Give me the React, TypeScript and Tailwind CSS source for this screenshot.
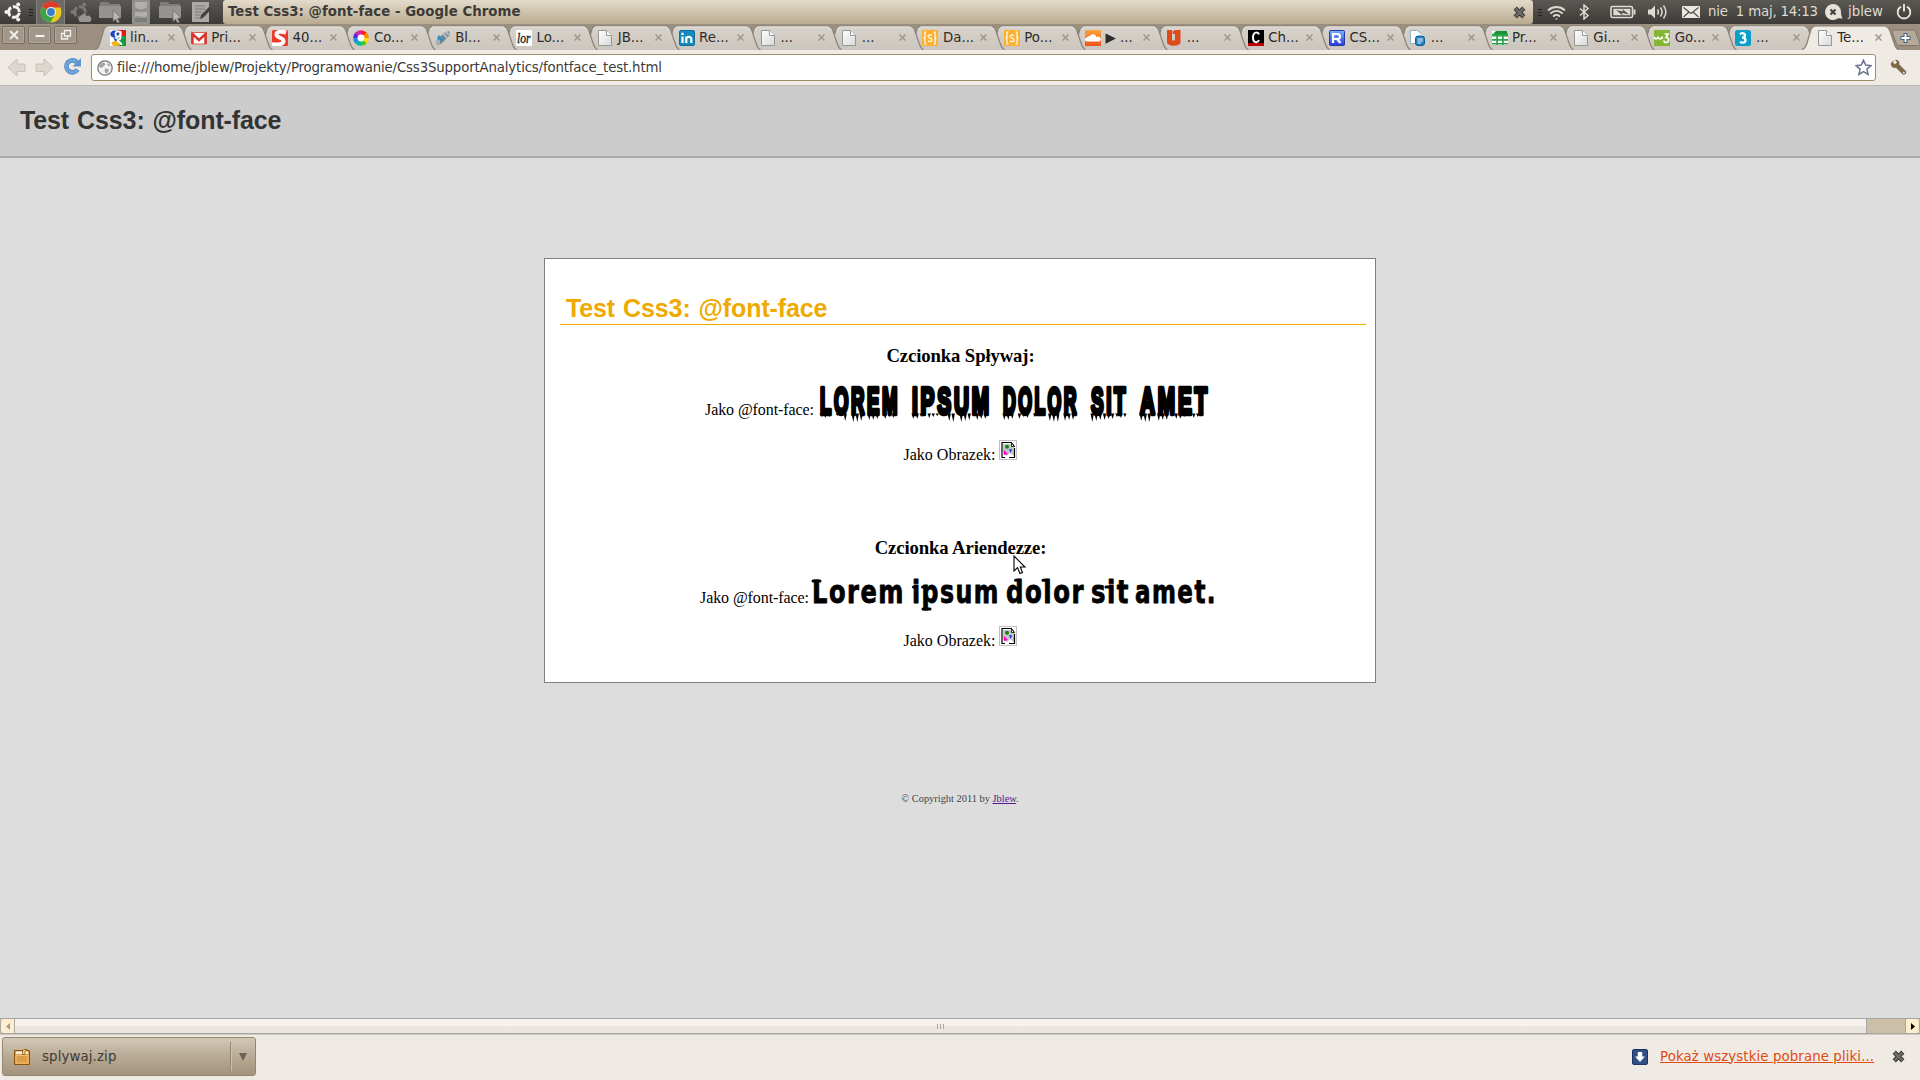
import React from "react";
import { LuWifi } from "react-icons/lu";

type Kind =
  | "google" | "gmail" | "s" | "wheel" | "pen" | "lor" | "doc" | "in" | "curly"
  | "cloud" | "u" | "c" | "r" | "gdoc" | "sheet" | "w3" | "three";

const tabs: { kind: Kind; label: string }[] = [
  { kind: "google", label: "lin..." },
  { kind: "gmail", label: "Pri..." },
  { kind: "s", label: "40..." },
  { kind: "wheel", label: "Co..." },
  { kind: "pen", label: "Bl..." },
  { kind: "lor", label: "Lo..." },
  { kind: "doc", label: "JB..." },
  { kind: "in", label: "Re..." },
  { kind: "doc", label: "..." },
  { kind: "doc", label: "..." },
  { kind: "curly", label: "Da..." },
  { kind: "curly", label: "Po..." },
  { kind: "cloud", label: "▶ ..." },
  { kind: "u", label: "..." },
  { kind: "c", label: "Ch..." },
  { kind: "r", label: "CS..." },
  { kind: "gdoc", label: "..." },
  { kind: "sheet", label: "Pr..." },
  { kind: "doc", label: "Gi..." },
  { kind: "w3", label: "Go..." },
  { kind: "three", label: "..." },
  { kind: "doc", label: "Te..." },
];

function iconArt(kind: Kind) {
  switch (kind) {
    case "google":
      return (
        <>
          <path d="M0 0h9L5 16H0z" fill="#fff" />
          <path d="M7 0h9v6H9z" fill="#e11a1a" />
          <path d="M9 6h7v10H8z" fill="#169a3c" />
          <path d="M0 6l7 4-3 6H0z" fill="#fff" />
          <ellipse cx="4.6" cy="4" rx="4.2" ry="3.6" fill="#1a49c0" />
          <path d="M3 7l6 4-3 2z" fill="#1a49c0" />
          <ellipse cx="6" cy="13.5" rx="4.5" ry="2.6" fill="#f2b21b" />
          <circle cx="8" cy="4" r="2.6" fill="none" stroke="#fff" strokeWidth="1.8" />
          <path d="M10.5 1v7c0 2-3 2-3 3s4 1 4 4" fill="none" stroke="#fff" strokeWidth="1.8" />
        </>
      );
    case "gmail":
      return (
        <>
          <rect x="0.5" y="2.5" width="15" height="11.5" rx="1" fill="#fff" stroke="#d9605a" />
          <path d="M1.5 14V4l6.500 6 6.500-6v10" fill="none" stroke="#d8342c" strokeWidth="2.400" />
        </>
      );
    case "s":
      return (
        <>
          <rect width="16" height="16" rx="1.500" fill="#ee3a2b" />
          <path d="M14 2.500C9.500 1 4.500 1.500 4.500 4.500c0 3.500 7 3 7 6.500 0 3-5 4.500-11.500 3" fill="none" stroke="#fff" strokeWidth="4" />
        </>
      );
    case "wheel":
      return (
        <g fill="none" strokeWidth="4.500">
          {["#f22", "#f80", "#fd0", "#3c2", "#0b9", "#28e", "#62d", "#d2a"].map((c, i) => (
            <circle
              key={c}
              cx="8"
              cy="8"
              r="5.600"
              stroke={c}
              pathLength={8}
              strokeDasharray="1.05 6.95"
              strokeDashoffset={-i + 2}
            />
          ))}
          <circle cx="8" cy="8" r="3.400" fill="#fff" stroke="none" />
        </g>
      );
    case "pen":
      return (
        <>
          <path d="M1 11l8-8 5-2 1 4-9 9-4 1z" fill="#7d8790" />
          <path d="M4 5l5 5-3 2-4-4z" fill="#2f8fc8" />
          <path d="M8 3l4 5M11 2l3 3" stroke="#c3cbd2" strokeWidth="1.500" />
          <circle cx="3" cy="12" r="2.300" fill="#a9b2b9" />
        </>
      );
    case "lor":
      return (
        <>
          <rect width="16" height="16" fill="#fff" />
          <text x="1" y="12.5" fontFamily="Liberation Serif, serif" fontStyle="italic" fontSize="14" textLength="13.5" lengthAdjust="spacingAndGlyphs" fill="#111" stroke="#111" strokeWidth=".3">
            lor
          </text>
        </>
      );
    case "doc":
      return (
        <>
          <path d="M1.500.5H9.500L14.500 5.500v10h-13z" fill="url(#paper)" stroke="#969696" />
          <path d="M9.500.5V5.500h5" fill="#fff" stroke="#969696" />
        </>
      );
    case "in":
      return (
        <>
          <rect x="0.500" y="0.500" width="15" height="15" rx="1.500" fill="#1689bd" stroke="#0e6f9f" />
          <path d="M3.500 6.500V13M3.500 2.700v2.200M7.300 13V6.500M7.300 9c0-2.500 5-3 5 0v4" fill="none" stroke="#fff" strokeWidth="2.200" />
        </>
      );
    case "curly":
      return (
        <>
          <rect width="16" height="16" rx="1" fill="#fdb02e" />
          <path d="M4.500 2H3v5L2 8l1 1v5h1.500M11.500 2H13v5l1 1-1 1v5h-1.500" fill="none" stroke="#fff" strokeWidth="1.200" />
          <path d="M10 5.500C8 4 6 5 6 6.300S10 8.500 10 10s-2 2.200-4 1" fill="none" stroke="#ffefd0" strokeWidth="1.500" />
        </>
      );
    case "cloud":
      return (
        <>
          <rect width="16" height="16" fill="url(#orange)" />
          <path d="M2 11.500a2 2 0 0 1 0-4 3 3 0 0 1 3-1.500 3.500 3.500 0 0 1 6.500 1 2.400 2.400 0 0 1 3 4.500z" fill="#fff" />
        </>
      );
    case "u":
      return <path d="M1 0h5v9.500c0 1.500 3 1.500 3 0V4H6.500V1.500L9 0h5.500v12c0 5-13.500 5-13.500 0z" fill="#dd4b1c" />;
    case "c":
      return (
        <>
          <rect width="16" height="16" fill="#000" />
          <rect y="13" width="16" height="3" fill="#c00008" />
          <path d="M11 4.500C10 1.500 5 1.500 5 7.500s5 5.500 6 2.500" fill="none" stroke="#fff" strokeWidth="2" />
        </>
      );
    case "r":
      return (
        <>
          <rect x="0.500" y="0.500" width="15" height="15" rx="1" fill="url(#blue)" stroke="#233aa8" />
          <path d="M4 13V4h4.500a2.300 2.300 0 0 1 0 5H5m3 0l3.500 4" fill="none" stroke="#fff" strokeWidth="2.200" />
        </>
      );
    case "gdoc":
      return (
        <>
          <path d="M.5.5H7.500L11.500 4v9.500H.5z" fill="#fff" stroke="#8fb1cb" />
          <rect x="5.500" y="6" width="9" height="9.500" rx="2.500" fill="#2483bd" stroke="#0d5f96" />
          <path d="M7.500 5.500l2.300-2.300 2.800 2.800M7.500 9h5.500M7.500 11h5.500M7.500 13h3.500" fill="none" stroke="#e4f4ff" />
        </>
      );
    case "sheet":
      return (
        <>
          <rect y="1" width="16" height="14" fill="#fff" />
          <path d="M4 1h11l1 4H0z" fill="#17913a" />
          <path d="M0 4h16v2.500H0zM0 9h16v1.700H0zM0 13h16v1.600H0zM4.200 4h1.700v11H4.200zM10 4h1.700v11H10z" fill="#2ba14a" />
        </>
      );
    case "w3":
      return (
        <>
          <rect width="16" height="16" fill="#85b535" />
          <path d="M0 6.500c0 3 4 3 4 0 0 3 4 3 4.500 0" fill="none" stroke="#fff" strokeWidth="1.700" />
          <path d="M10.500 4H14l-2 3.500c4 0 3 5 0 5-1.500 0-2-1-2-2" fill="none" stroke="#fff" strokeWidth="1.700" />
        </>
      );
    case "three":
      return (
        <>
          <rect width="16" height="16" rx="2.500" fill="#0a9fc9" />
          <path d="M5 4.300C7 2.500 10 3 10 5.300 10 7 8.500 7.700 7 7.700c2 0 3.500.8 3.500 2.600 0 2.700-3.500 3-5.500 1.500" fill="none" stroke="#fff" strokeWidth="2.300" />
        </>
      );
  }
}

function CloseMark() {
  return (
    <svg className="size-[7px] shrink-0" viewBox="0 0 7 7">
      <path d="M.5.5l6 6M6.500.5l-6 6" stroke="#9c978f" strokeWidth="1.500" />
    </svg>
  );
}

function Tab({ kind, label, active, z }: { kind: Kind; label: string; active: boolean; z: number }) {
  return (
    <div className="relative h-[25px] w-[81.3px] shrink-0" style={{ zIndex: z }}>
      <svg className="absolute left-0 top-0 h-[25px] w-[97px]" viewBox="0 0 97 25">
        <path
          d="M0 25C3 24 4 21 5 18L8.500 6C9.500 2 11 .8 14 .8H82C85 .8 86.500 2 88 6l4 12c1 3 2 6 4.500 7z"
          fill={active ? "#efebe4" : "url(#tab)"}
        />
        <path
          d="M0 24.500C3 24 4 21 5 18L8.500 6C9.500 2 11 .8 14 .8H82C85 .8 86.500 2 88 6l4 12c1 3 2 6 4.500 6.500"
          fill="none"
          stroke={active ? "#8a7f70" : "#8b8377"}
          strokeWidth="1.200"
        />
        {!active && <path d="M10 5c1-2.500 2-3 4-3h68c2 0 3 .6 4 3" fill="none" stroke="#e6e2dc" />}
      </svg>
      <div className="relative flex h-[25px] items-center pl-[14.5px]">
        <svg className="size-4 shrink-0" viewBox="0 0 16 16">{iconArt(kind)}</svg>
        <span className="ml-[4.500px] w-[37.500px] shrink-0 whitespace-nowrap text-[13.33px] leading-[25px] text-[#2f2b27]">{label}</span>
        <CloseMark />
      </div>
    </div>
  );
}

function WindowButton({ children }: { children: React.ReactNode }) {
  return (
    <div className="grid h-[18px] w-[23px] place-items-center rounded-[2px] border border-[#776e61] bg-[#a0968a] shadow-[inset_0_0_0_1px_#b0a699]">
      <svg className="h-[12px] w-[14px]" viewBox="0 0 14 12" fill="none" stroke="#f4f1ec" strokeWidth="1.800">
        {children}
      </svg>
    </div>
  );
}

function Ubuntu({ color }: { color: string }) {
  return (
    <g fill="none" stroke={color}>
      <circle cx="10" cy="10" r="5.300" strokeWidth="3" strokeDasharray="9.300 1.800" strokeDashoffset="-0.900" />
      <g fill={color} stroke="none">
        <circle cx="2.400" cy="10" r="2" />
        <circle cx="14.200" cy="2.500" r="2" />
        <circle cx="14.200" cy="17.500" r="2" />
      </g>
    </g>
  );
}

function Folder() {
  return (
    <svg className="h-[22px] w-[24px]" viewBox="0 0 24 22">
      <path d="M1 1h8l2 2h10v13H1z" fill="#7f7e7a" />
      <path d="M0 5h22v12H0z" fill="#94938f" />
      <path d="M14 9l8 8-3.500.3 2 4-2 .7-1.800-3.800L14 20.500z" fill="#b9b8b4" stroke="#6a6965" strokeWidth=".7" />
    </svg>
  );
}

function BoldX() {
  return (
    <svg className="size-[13px]" viewBox="0 0 13 13">
      <path d="M2.200 2.200l8.600 8.600M10.800 2.200l-8.600 8.600" stroke="#3f3e3b" strokeWidth="4.600" />
      <path d="M2.600 2.600l7.800 7.800M10.400 2.600l-7.800 7.800" stroke="#6d6c68" strokeWidth="2.400" />
    </svg>
  );
}

function Grip() {
  return (
    <div className="flex w-[4px] flex-col gap-[2px]">
      <i className="h-px bg-[#23221f]" />
      <i className="h-px bg-[#23221f]" />
      <i className="h-px bg-[#23221f]" />
    </div>
  );
}

function Panel() {
  return (
    <div className="flex h-6 bg-linear-to-b from-[#5a5954] to-[#3c3b37] text-[#dfdbd2]">
      <div className="flex w-[223px] shrink-0 items-center">
        <svg className="ml-[4px] size-[20px]" viewBox="0 0 20 20"><Ubuntu color="#f5f3ef" /></svg>
        <div className="ml-[5px]"><Grip /></div>
        <div className="ml-[3px] grid h-6 w-[29px] place-items-center border-x border-[#83827e] bg-[#6b6a66]">
          <svg className="size-[22px]" viewBox="0 0 22 22">
            <circle cx="11" cy="11" r="10.500" fill="#e8c81c" />
            <path d="M11 11L1.900 5.800A10.500 10.500 0 0 1 20.500 6.500H11z" fill="#dd3b2b" />
            <path d="M11 11L1.900 5.800A10.500 10.500 0 0 0 10.500 21.500L15 13z" fill="#3fa447" />
            <circle cx="11" cy="11" r="5" fill="#f0f0ee" />
            <circle cx="11" cy="11" r="3.900" fill="#3b7fc8" />
          </svg>
        </div>
        <svg className="ml-[4px] h-[24px] w-[25px]" viewBox="0 0 25 24">
          <g transform="translate(1 2)"><Ubuntu color="#7a7975" /></g>
          <path d="M11 22a3 3 0 0 1 0-5 3.500 3.500 0 0 1 6.500-1 3 3 0 0 1 3 6z" fill="#969591" />
        </svg>
        <div className="ml-[5px]"><Folder /></div>
        <svg className="ml-[9px] h-[24px] w-[18px]" viewBox="0 0 18 24">
          <rect width="18" height="24" rx="1" fill="#91908c" />
          <path d="M3 2h12v5c-3 3-9 3-12 0zM3 12h12v4c-4 3-8-2-12 1z" fill="#b1b0ac" />
          <path d="M3 19h12M3 21h12" stroke="#6b6a66" />
        </svg>
        <div className="ml-[9px]"><Folder /></div>
        <svg className="ml-[8px] h-[22px] w-[22px]" viewBox="0 0 22 22">
          <path d="M1 1h17v20H1z" fill="#aaa9a5" />
          <path d="M4 5h10M4 8h10M4 11h7M4 14h5M4 17h8" stroke="#7c7b77" />
          <path d="M18.500 5.500L10 14l-1 4 4-2 7.500-8z" fill="#454440" />
        </svg>
      </div>
      <div className="flex w-[1310px] shrink-0 items-center justify-between rounded-[3px] bg-linear-to-b from-[#e4dbcb] to-[#b9ab90] pl-[5px] pr-[7px]">
        <span className="text-[13.33px] font-bold leading-[22px] tracking-[0.03px] text-[#3c3b37]">Test Css3: @font-face - Google Chrome</span>
        <BoldX />
      </div>
      <div className="flex items-center text-[13.33px]">
        <div className="ml-[5px]"><Grip /></div>
        <LuWifi className="ml-[5px] size-[19px] shrink-0" strokeWidth={2.400} />
        <svg className="ml-[12px] h-[16px] w-[12px] shrink-0" viewBox="0 0 12 16" fill="none" stroke="currentColor" strokeWidth="1.500">
          <path d="M2 4.500l8 7L6 15V1l4 3.500-8 7" />
        </svg>
        <svg className="ml-[20px] h-[14px] w-[26px] shrink-0" viewBox="0 0 26 14">
          <rect x="1" y="1.500" width="21.500" height="11" rx="1.500" fill="none" stroke="currentColor" strokeWidth="1.600" />
          <rect x="3.300" y="3.800" width="17" height="6.500" fill="currentColor" />
          <rect x="23.500" y="4.500" width="2" height="5" fill="currentColor" />
          <path d="M6 5l7 1.500-.5-2.500L19 9.500 12 8l.5 2.500z" fill="#55544f" />
        </svg>
        <svg className="ml-[12px] h-[16px] w-[21px] shrink-0" viewBox="0 0 21 16">
          <path d="M0 5.500h3l4-4v13l-4-4H0z" fill="currentColor" />
          <path d="M9.500 5.500q1.800 2.500 0 5M12.500 3.500q3.200 4.500 0 9M15.500 1.500q4.800 6.500 0 13" fill="none" stroke="currentColor" strokeWidth="1.500" />
        </svg>
        <svg className="ml-[13px] h-[12px] w-[18px] shrink-0" viewBox="0 0 18 12">
          <rect width="18" height="12" rx="1" fill="#ece8df" />
          <path d="M1.500 1.500L9 7.500l7.500-6M1.500 11L7 6M16.500 11L11 6" fill="none" stroke="#4a4945" strokeWidth="1.100" />
        </svg>
        <span className="ml-[8px] w-[110px] shrink-0 whitespace-pre leading-[22px] tracking-[-0.2px]">nie  1 maj, 14:13</span>
        <svg className="ml-[7px] h-[16px] w-[18px] shrink-0" viewBox="0 0 18 16">
          <path d="M8 0a8 8 0 0 1 8 8c0 3 .5 5 1.800 6.500L13 14.300A8 8 0 1 1 8 0z" fill="#e6e2d9" />
          <path d="M5.500 5.500l5 5M10.500 5.500l-5 5" stroke="#45443f" strokeWidth="2.200" />
        </svg>
        <span className="ml-[5px] w-[36px] shrink-0 leading-[22px]">jblew</span>
        <svg className="ml-[12px] size-[16px] shrink-0" viewBox="0 0 16 16" fill="none" stroke="#ece8df" strokeWidth="1.900">
          <path d="M5 2.700a6.300 6.300 0 1 0 6 0M8 0v7.500" />
        </svg>
      </div>
    </div>
  );
}

function TabStrip() {
  return (
    <div className="flex h-[26px] bg-[#9b9080] pt-px">
      <div className="flex w-[95px] shrink-0 gap-[3px] pl-[2px] pt-px">
        <WindowButton><path d="M3 2l8 8M11 2l-8 8" /></WindowButton>
        <WindowButton><path d="M2.500 7h9" strokeWidth="2.200" /></WindowButton>
        <WindowButton><path d="M5.500 1.500h6v5.500h-6zM5 4.500H2.500v5.500h6V7.500" strokeWidth="1.300" /></WindowButton>
      </div>
      {tabs.map((t, i) => (
        <Tab key={i} kind={t.kind} label={t.label} active={i === tabs.length - 1} z={i === tabs.length - 1 ? 40 : 30 - i} />
      ))}
      <svg className="ml-[7px] mt-[4px] h-[18px] w-[30px] shrink-0" viewBox="0 0 30 18">
        <path d="M3 1h18c2 0 3 .5 4 3l3.500 9c.8 2.500 0 3.500-2 3.500H9c-2 0-3-1-4-3L1.500 4C1 2 1.500 1 3 1z" fill="#b3aa9c" stroke="#7e7466" />
        <path d="M14.500 4v10M9.500 9h10" stroke="#4b6283" strokeWidth="4" />
        <path d="M14.500 5v8M10.500 9h8" stroke="#fff" strokeWidth="1.800" />
      </svg>
    </div>
  );
}

function Toolbar() {
  return (
    <div className="relative z-50 flex h-[36px] items-start border-b border-[#bdb9ae] bg-[#efebe4]">
      <svg className="ml-[7px] mt-[8px] h-[19px] w-[48px]" viewBox="0 0 48 19" fill="#dcd8cf" stroke="#c5c1b8">
        <path d="M1 9.500L10 1v5h8v7.500h-8V18z" />
        <path d="M46 9.500L37 1v5h-8v7.500h8V18z" />
      </svg>
      <svg className="ml-[8px] mt-[7px] h-[19px] w-[19px]" viewBox="0 0 19 19">
        <path d="M14.500 12.500a6 6 0 1 1-.5-7" fill="none" stroke="#4e83c0" strokeWidth="4.600" />
        <path d="M14.500 12.500a6 6 0 1 1-.5-7" fill="none" stroke="#6fa3dc" strokeWidth="3" />
        <path d="M18 1v8.500H9.500z" fill="#5f95d2" />
      </svg>
      <div className="ml-[9px] mt-[4px] flex h-[27px] w-[1785px] items-center rounded-[3px] border border-[#a18d6d] bg-white pl-[5px] pr-[3px]">
        <svg className="size-[16px]" viewBox="0 0 16 16">
          <circle cx="8" cy="8" r="7.200" fill="#f2f2f2" stroke="#777" strokeWidth="1.300" />
          <path d="M3 3.500l4-1 1.500 2L6 7 3.500 8 2 6zM8 8.500l4 .5-1 3.500L9 14l-1.500-3zM11 3l2.500 2.500-1.500 1-2-2z" fill="#a5a5a5" />
        </svg>
        <span className="ml-[4px] grow text-[13.33px] leading-[25px] tracking-[-0.16px] text-[#3c3b37]">
          file:///home/jblew/Projekty/Programowanie/Css3SupportAnalytics/fontface_test.html
        </span>
        <svg className="size-[17px]" viewBox="0 0 17 17">
          <path d="M8.500 1.200l2.200 4.900 5.200.5-4 3.500 1.200 5.300-4.600-2.800-4.600 2.800 1.200-5.300-4-3.500 5.200-.5z" fill="#fff" stroke="#69738f" strokeWidth="1.500" />
        </svg>
      </div>
      <svg className="ml-[14px] mt-[9px] size-[17px]" viewBox="0 0 17 17">
        <path d="M3.500 1l-.3 3.200L5.500 5l1.500-1.500L5 .8C8 .2 10 2.500 9.300 5.500l6.500 6.500c1.600 2-1.300 4.800-3.300 3.300L6 8.800C3 9.500.5 7.500.8 4.500z" fill="#806849" />
        <circle cx="13.800" cy="13.700" r=".9" fill="#efebe4" />
      </svg>
    </div>
  );
}

const dripWords = [
  { text: "LOREM", x: 0, w: 80 },
  { text: "IPSUM", x: 92, w: 80 },
  { text: "DOLOR", x: 183, w: 76 },
  { text: "SIT", x: 271, w: 37 },
  { text: "AMET", x: 320, w: 70 },
];
const dripDepths = [3, 7, 2, 5, 8, 4, 6, 2, 5, 8, 3, 6, 7];

function DrippingLine() {
  return (
    <svg className="h-[40px] w-[398px] shrink-0 overflow-visible" viewBox="0 0 398 40">
      {dripWords.map((word, n) => {
        const pitch = word.w / word.text.length;
        return (
          <g key={word.text}>
            <text
              x={word.x + 2}
              y="29"
              fontFamily="'Liberation Sans', sans-serif"
              fontWeight="bold"
              fontSize="37"
              letterSpacing="5"
              textLength={word.w}
              lengthAdjust="spacingAndGlyphs"
              stroke="#000"
              strokeWidth="4.400"
              strokeLinejoin="round"
            >
              {word.text}
            </text>
            {Array.from({ length: word.text.length * 3 }, (_, i) => {
              const x = word.x + Math.floor(i / 3) * pitch + 1.5 + (i % 3) * 4;
              const d = dripDepths[(i * 5 + n * 3) % dripDepths.length];
              return <path key={i} d={`M${x} 28.500L${x + 1.8} ${29 + d}L${x + 3.4} 28.500z`} />;
            })}
          </g>
        );
      })}
    </svg>
  );
}

const slabWords = [
  { text: "Lorem", x: 0, w: 93 },
  { text: "ipsum", x: 100, w: 88 },
  { text: "dolor", x: 194, w: 79 },
  { text: "sit", x: 279, w: 39 },
  { text: "amet.", x: 323, w: 82 },
];

function SlabLine() {
  return (
    <svg className="h-[40px] w-[409px] shrink-0 overflow-visible" viewBox="0 0 409 40">
      {slabWords.map((word) => (
        <text
          key={word.text}
          x={word.x}
          y="28"
          fontFamily="'DejaVu Sans Condensed', 'DejaVu Sans', sans-serif"
          fontWeight="bold"
          fontSize="32"
          letterSpacing="1.800"
          textLength={word.w}
          lengthAdjust="spacingAndGlyphs"
          stroke="#000"
          strokeWidth=".8"
          strokeLinejoin="round"
        >
          {word.text}
        </text>
      ))}
      <path
        d="M1 6h7M101.500 12h3M110.500 12h3M111 34h7M203.500 5.200h3M231 5.200h3M294 12h3"
        fill="none"
        stroke="#000"
        strokeWidth="3"
        strokeLinecap="round"
      />
    </svg>
  );
}

function BrokenImage() {
  return (
    <svg className="ml-[4px] h-[20px] w-[18px] shrink-0" viewBox="0 0 18 20">
      <rect x=".5" y=".5" width="17" height="19" fill="#fff" stroke="#c0c0c0" />
      <path d="M4 4h8l3 3v9l-4-3-3 3-4-2z" fill="#c6c6c6" />
      <path d="M3 18V2.500h9.500M3 17.500h3M10 17.500h5.500V8" fill="none" stroke="#000" strokeWidth="1.200" />
      <path d="M12.500 2.500v4h3zM12.500 2.500l3 4" fill="#fff" stroke="#000" strokeWidth=".8" />
      <circle cx="8" cy="6.800" r="2" fill="#12851a" />
      <path d="M5 10l4 4-4 1z" fill="#f0c" />
      <path d="M10 9l3 .5-1.500 3.500z" fill="#1238e8" />
    </svg>
  );
}

function ImageRow() {
  return (
    <div className="flex h-[24px] justify-center">
      <span className="mt-[5px] leading-[20px]">Jako Obrazek:</span>
      <BrokenImage />
    </div>
  );
}

function Page() {
  return (
    <div className="flex h-[932px] flex-col items-center bg-[#ddd]">
      <div className="flex h-[72px] w-full shrink-0 items-center border-b-2 border-[#aaa] bg-[#ccc] pb-[2px] pl-[20px] font-['Liberation_Sans',sans-serif] text-[25px] font-bold leading-[30px] tracking-[-0.12px] text-[#333] [word-spacing:1.2px]">
        Test Css3: @font-face
      </div>
      <div className="relative mt-[100px] h-[425px] w-[832px] shrink-0 border border-[#808080] bg-white pl-[15px] pr-[9px] pt-[34px] font-['Liberation_Serif',serif] text-[16px] text-black">
        <h1 className="border-b border-[#eeaa00] pb-px pl-[6px] font-['Liberation_Sans',sans-serif] text-[25px] font-bold leading-[30px] tracking-[-0.12px] text-[#eeaa00] [word-spacing:1.2px]">
          Test Css3: @font-face
        </h1>
        <div className="pr-[5px]">
          <h3 className="mt-[20px] text-center text-[18.72px] font-bold leading-[22px] tracking-[-0.12px]">Czcionka Spływaj:</h3>
          <div className="mt-[18px] flex h-[40px] justify-center">
            <span className="mr-[4px] mt-[15px] shrink-0 leading-[20px] tracking-[-0.08px]">Jako @font-face:</span>
            <DrippingLine />
          </div>
          <div className="mt-[15px]"><ImageRow /></div>
          <h3 className="mt-[73px] text-center text-[18.72px] font-bold leading-[22px] tracking-[-0.12px]">Czcionka Ariendezze:</h3>
          <div className="mt-[16px] flex h-[40px] justify-center">
            <span className="mr-[3px] mt-[13px] shrink-0 leading-[20px] tracking-[-0.08px]">Jako @font-face:</span>
            <SlabLine />
          </div>
          <div className="mt-[11px]"><ImageRow /></div>
        </div>
        <svg className="absolute left-[468px] top-[296px] h-[20px] w-[14px]" viewBox="0 0 14 20">
          <path d="M1 1v15l3.500-3.300L7 18.500l2.500-1L7.300 12h4.700z" fill="#fff" stroke="#000" strokeWidth="1.100" />
        </svg>
      </div>
      <div className="mt-[110px] font-['Liberation_Serif',serif] text-[10.400px] leading-[12px] text-[#444]">
        © Copyright 2011 by <a className="text-[#551a8b] underline">Jblew</a>.
      </div>
    </div>
  );
}

function ScrollBar() {
  return (
    <div className="flex h-[16px] border-y border-[#a8a6a2] bg-[#cbbfa8]">
      <div className="grid w-[15px] shrink-0 place-items-center rounded-l-[3px] border-x border-[#a8a6a2] bg-[#fdeed0]">
        <svg className="h-[7px] w-[4px]" viewBox="0 0 4 7"><path d="M4 0v7L0 3.500z" fill="#a09c96" /></svg>
      </div>
      <div className="flex w-[1851px] items-center justify-center gap-[2px] bg-linear-to-b from-[#f6f1ea] from-50% to-[#ebe6df] to-50%">
        <i className="h-[5px] w-px bg-[#aaa6a0]" />
        <i className="h-[5px] w-px bg-[#aaa6a0]" />
        <i className="h-[5px] w-px bg-[#aaa6a0]" />
      </div>
      <div className="grow border-l border-[#a8a6a2]" />
      <div className="grid w-[15px] shrink-0 place-items-center rounded-r-[3px] border-x border-[#a8a6a2] bg-[#fdeed0]">
        <svg className="h-[7px] w-[4px]" viewBox="0 0 4 7"><path d="M0 0v7l4-3.500z" fill="#000" /></svg>
      </div>
    </div>
  );
}

function DownloadShelf() {
  return (
    <div className="flex h-[46px] items-start border-t border-[#cbc7be] bg-[#efebe4] pl-[2px] pt-[2px] text-[13.33px]">
      <div className="flex h-[39px] w-[254px] items-center rounded-[3px] border border-[#94866f] bg-linear-to-b from-[#d3c8b7] via-[#b8aa95] to-[#a4937b] pl-[11px]">
        <svg className="size-[16px]" viewBox="0 0 16 16">
          <path d="M.5 1.500h15v14H.5z" fill="#dc9c47" stroke="#8a5508" />
          <path d="M2 2.500h12V5H2z" fill="#f6efe4" />
          <path d="M2 6.500h12v7.500H2z" fill="none" stroke="#efc07c" />
          <path d="M8.500 5.500v-4L10 .5h3l-2 2v3z" fill="#f0d59f" stroke="#8a5508" strokeWidth=".8" />
        </svg>
        <span className="ml-[12px] grow leading-[20px] tracking-[0.12px] text-[#3c3b37]">splywaj.zip</span>
        <i className="h-[29px] w-px bg-[#94866f]" />
        <i className="h-[29px] w-px bg-[#cfc3b0]" />
        <svg className="ml-[7px] mr-[8px] h-[8px] w-[8px]" viewBox="0 0 8 8"><path d="M0 0h8L4 8z" fill="#6a6358" /></svg>
      </div>
      <div className="ml-auto mr-[15px] flex h-[39px] items-center">
        <svg className="size-[16px]" viewBox="0 0 16 16">
          <rect x=".5" y=".5" width="15" height="15" rx="1.500" fill="#2f4f86" stroke="#1d3563" />
          <path d="M5.800 3h4.400v4.500H13L8 13 3 7.500h2.800z" fill="#fff" />
        </svg>
        <span className="ml-[12px] w-[214px] whitespace-nowrap leading-[20px] tracking-[0.1px] text-[#e04a12] underline">Pokaż wszystkie pobrane pliki...</span>
        <div className="ml-[18px]"><BoldX /></div>
      </div>
    </div>
  );
}

export default function App() {
  return (
    <div className="h-[1080px] w-[1920px] overflow-hidden bg-[#ddd] font-['DejaVu_Sans',sans-serif]">
      <svg className="absolute size-0">
        <defs>
          <linearGradient id="tab" x2="0" y2="1"><stop stopColor="#d8d3cc" /><stop offset="1" stopColor="#cbc5bd" /></linearGradient>
          <linearGradient id="paper" x2="1" y2="1"><stop stopColor="#fff" /><stop offset="1" stopColor="#d8d8d8" /></linearGradient>
          <linearGradient id="orange" x2="0" y2="1"><stop stopColor="#f9a63a" /><stop offset="1" stopColor="#f4511e" /></linearGradient>
          <linearGradient id="blue" x2="0" y2="1"><stop stopColor="#7ab2f5" /><stop offset="1" stopColor="#2a3be0" /></linearGradient>
        </defs>
      </svg>
      <Panel />
      <TabStrip />
      <Toolbar />
      <Page />
      <ScrollBar />
      <DownloadShelf />
    </div>
  );
}
